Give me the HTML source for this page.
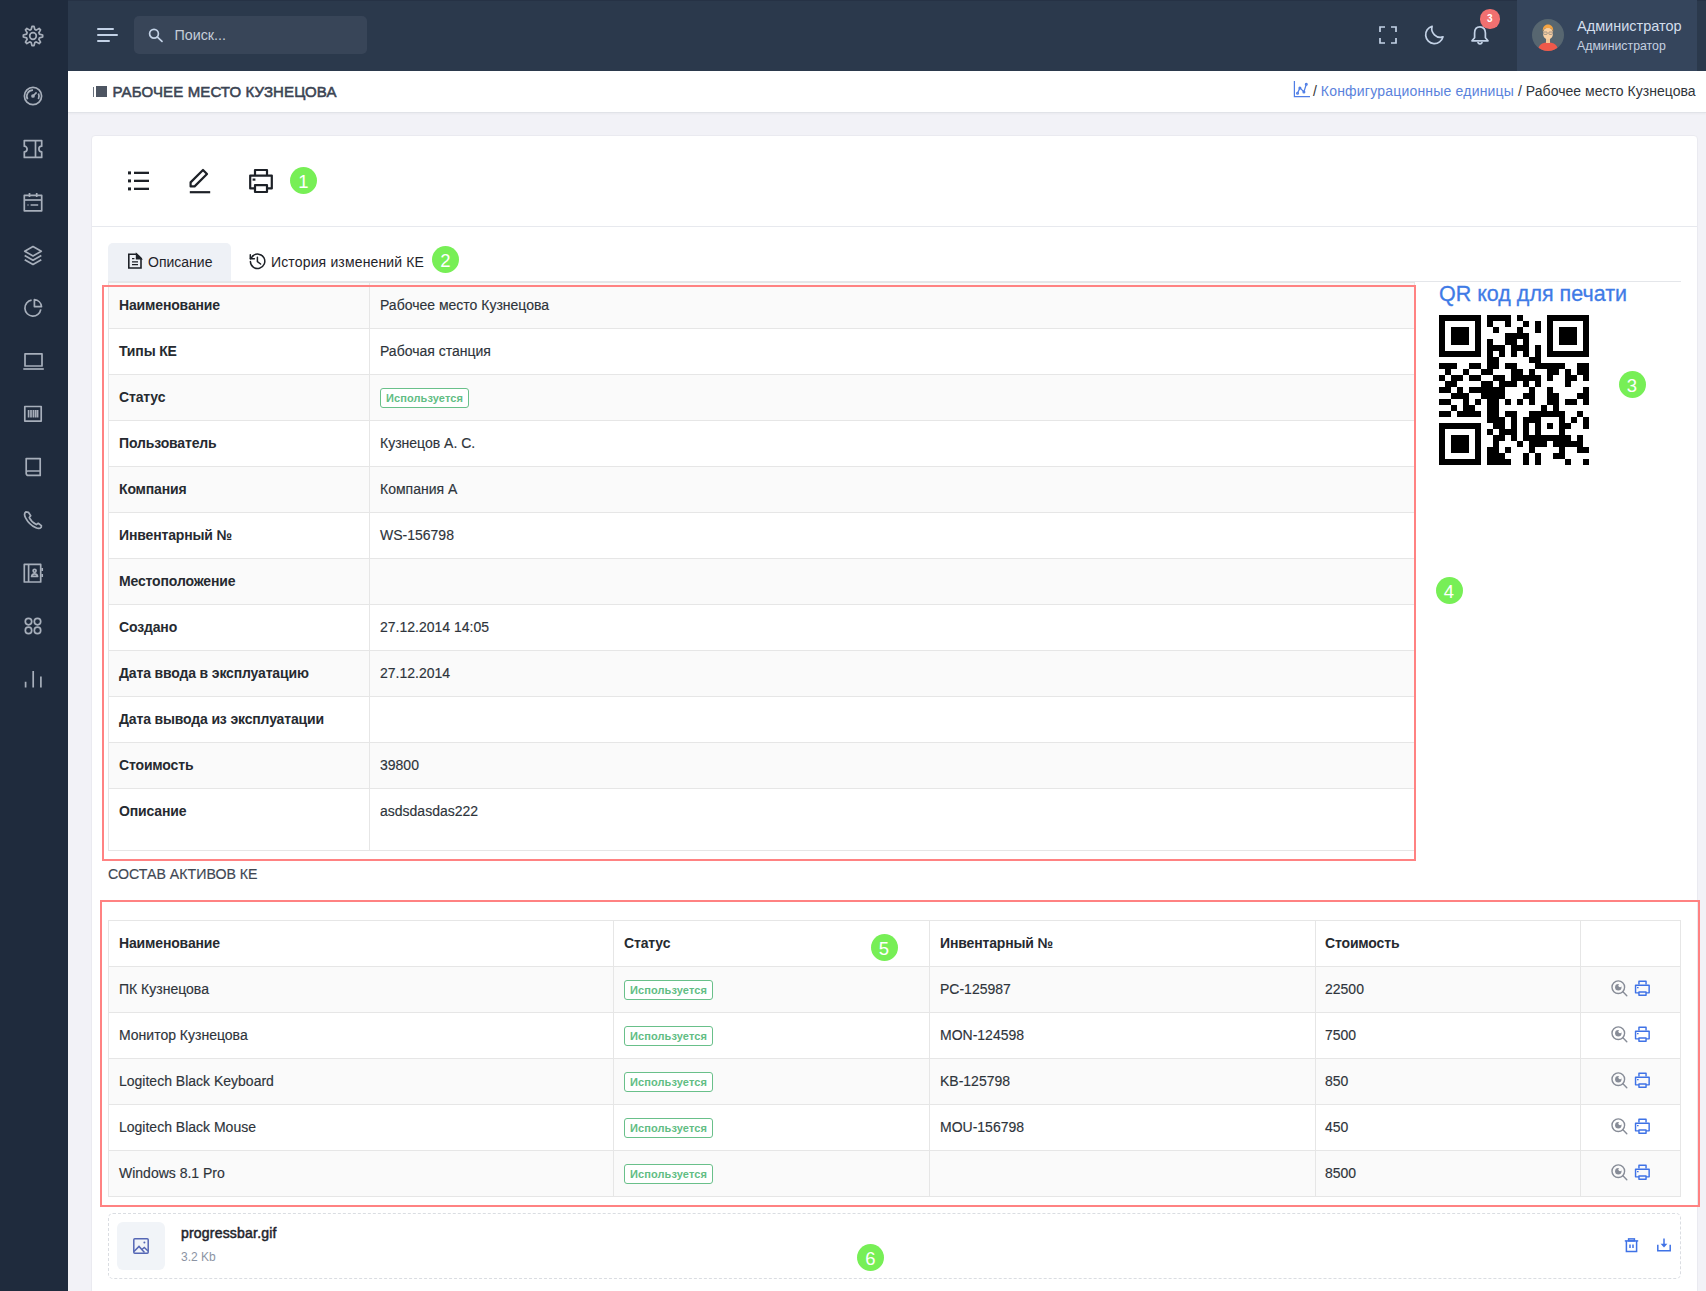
<!DOCTYPE html><html><head><meta charset="utf-8"><style>
*{box-sizing:border-box;margin:0;padding:0}
html,body{width:1706px;height:1291px;overflow:hidden;background:#f2f2f7;font-family:"Liberation Sans",sans-serif;color:#212529;font-size:14px}
.abs,.si,.row,.lab,.val,.vline,.badge,.dot,.txt{position:absolute}
#sidebar{position:absolute;left:0;top:0;width:68px;height:1291px;background:#1f2b3d}
#header{position:absolute;left:68px;top:0;width:1638px;height:71px;background:#2b394c;border-top:1px solid #263245}
#search{position:absolute;left:134px;top:16px;width:233px;height:38px;background:#384558;border-radius:5px}
#profile{position:absolute;left:1517px;top:0;width:180px;height:71px;background:#35455c}
#titlebar{position:absolute;left:68px;top:71px;width:1638px;height:42px;background:#fff;border-bottom:1px solid #e1e3e8;box-shadow:0 1px 2px rgba(0,0,0,0.04)}
#card{position:absolute;left:91px;top:135px;width:1607px;height:1200px;background:#fff;border:1px solid #eaeaf0;border-radius:4px}
.row{border:1px solid #e6e6e6}
.vline{width:1px;background:#e6e6e6}
.lab{font-weight:bold;color:#262a30;line-height:16px;white-space:nowrap;letter-spacing:-0.15px}
.val{color:#2e343b;line-height:16px;white-space:nowrap;-webkit-text-stroke:0.15px #2e343b}
.red{position:absolute;border:2px solid #ff8282}
.dot{width:27px;height:27px;border-radius:50%;background:#77ef56;color:#fff;font-size:18.5px;text-align:center;line-height:30px}
.badge{width:89px;height:20px;border:1px solid #69c08a;color:#62bd84;border-radius:3px;font-size:11px;font-weight:bold;line-height:18px;text-align:center;background:#fff;letter-spacing:0.1px}
.txt{white-space:nowrap}
</style></head><body>
<svg width="0" height="0" style="position:absolute"><defs><mask id="bite" maskUnits="userSpaceOnUse" x="0" y="0" width="17" height="17"><rect width="17" height="17" fill="#fff"/><circle cx="9.1" cy="5.5" r="1.7" fill="#000"/></mask></defs></svg>
<div id="sidebar"></div><div id="header"></div>
<svg class="si" style="left:23px;top:26px" width="20" height="20" viewBox="0 0 20 20" fill="none" stroke="#a7afbb" stroke-width="1.7" stroke-linecap="butt" stroke-linejoin="round" overflow="visible"><path d="M8.15 3.56 L8.99 0.35 L11.01 0.35 L11.85 3.56 L13.25 4.14 L16.10 2.46 L17.54 3.90 L15.86 6.75 L16.44 8.15 L19.65 8.99 L19.65 11.01 L16.44 11.85 L15.86 13.25 L17.54 16.10 L16.10 17.54 L13.25 15.86 L11.85 16.44 L11.01 19.65 L8.99 19.65 L8.15 16.44 L6.75 15.86 L3.90 17.54 L2.46 16.10 L4.14 13.25 L3.56 11.85 L0.35 11.01 L0.35 8.99 L3.56 8.15 L4.14 6.75 L2.46 3.90 L3.90 2.46 L6.75 4.14Z"/><circle cx="10" cy="10" r="3.3"/></svg>
<svg class="si" style="left:23px;top:86px" width="20" height="20" viewBox="0 0 20 20" fill="none" stroke="#a7afbb" stroke-width="1.7" stroke-linecap="butt" stroke-linejoin="round" overflow="visible"><circle cx="10" cy="10" r="8.6"/><path d="M4.6 13.2A6 6 0 0 1 10 4.2"/><path d="M15.4 7.5A6 6 0 0 1 15.4 13.2"/><path d="M10 10L13.6 6.4"/><circle cx="10" cy="10" r="1" fill="#a7afbb"/></svg>
<svg class="si" style="left:23px;top:139px" width="20" height="20" viewBox="0 0 20 20" fill="none" stroke="#a7afbb" stroke-width="1.7" stroke-linecap="butt" stroke-linejoin="round" overflow="visible"><path d="M1.3 1.6H18.7V7.2A2.8 2.8 0 0 0 18.7 12.8V18.4H1.3V12.8A2.8 2.8 0 0 0 1.3 7.2Z"/><path d="M12.5 1.6V18.4"/></svg>
<svg class="si" style="left:23px;top:192px" width="20" height="20" viewBox="0 0 20 20" fill="none" stroke="#a7afbb" stroke-width="1.7" stroke-linecap="butt" stroke-linejoin="round" overflow="visible"><rect x="1.3" y="3.4" width="17.4" height="15.4"/><path d="M1.3 8H18.7"/><path d="M6.5 1V5M13.7 1V5"/><path d="M4.5 13H5.5M7.6 13H15.2"/></svg>
<svg class="si" style="left:23px;top:245px" width="20" height="20" viewBox="0 0 20 20" fill="none" stroke="#a7afbb" stroke-width="1.7" stroke-linecap="butt" stroke-linejoin="round" overflow="visible"><path d="M10 1.5L18.3 6.2L10 10.9L1.7 6.2Z"/><path d="M1.7 10.5L10 15.2L18.3 10.5"/><path d="M1.7 14.7L10 19.4L18.3 14.7"/></svg>
<svg class="si" style="left:23px;top:298px" width="20" height="20" viewBox="0 0 20 20" fill="none" stroke="#a7afbb" stroke-width="1.7" stroke-linecap="butt" stroke-linejoin="round" overflow="visible"><path d="M17.8 11.4A8 8 0 1 1 8.6 2.2"/><path d="M11.4 1.5A8 8 0 0 1 18.5 8.6H11.4Z"/></svg>
<svg class="si" style="left:23px;top:351px" width="20" height="20" viewBox="0 0 20 20" fill="none" stroke="#a7afbb" stroke-width="1.7" stroke-linecap="butt" stroke-linejoin="round" overflow="visible"><rect x="2" y="2.8" width="17" height="12.2"/><path d="M0.3 18H20.8"/></svg>
<svg class="si" style="left:23px;top:404px" width="20" height="20" viewBox="0 0 20 20" fill="none" stroke="#a7afbb" stroke-width="1.7" stroke-linecap="butt" stroke-linejoin="round" overflow="visible"><rect x="1.8" y="2.5" width="16.4" height="14.6"/><path d="M5.6 6V13.6M8 6V13.6M10.4 6V13.6M12.6 6V13.6M14.6 6V13.6"/></svg>
<svg class="si" style="left:23px;top:457px" width="20" height="20" viewBox="0 0 20 20" fill="none" stroke="#a7afbb" stroke-width="1.7" stroke-linecap="butt" stroke-linejoin="round" overflow="visible"><path d="M3.2 15.4V1.6H17.2V18.4H5.2A2 2 0 0 1 3.2 16.4V15.4A1.5 1.5 0 0 1 4.7 14H17.2"/></svg>
<svg class="si" style="left:23px;top:510px" width="20" height="20" viewBox="0 0 20 20" fill="none" stroke="#a7afbb" stroke-width="1.7" stroke-linecap="butt" stroke-linejoin="round" overflow="visible"><path d="M2.8 1.8C1.4 3 1.2 5.2 2.6 7.8C5 12.4 8.6 15.8 13 17.8C15.4 18.9 17.2 18.5 18.2 17.3L18.4 15.6L15.2 13.3L13.3 14.6C10.3 13.2 7.8 10.6 6.3 7.6L7.7 5.7L5.4 2.3Z"/></svg>
<svg class="si" style="left:23px;top:563px" width="20" height="20" viewBox="0 0 20 20" fill="none" stroke="#a7afbb" stroke-width="1.7" stroke-linecap="butt" stroke-linejoin="round" overflow="visible"><rect x="1.3" y="1.4" width="16.4" height="17.6"/><path d="M5.6 1.4V19"/><circle cx="11.6" cy="7.8" r="1.5"/><path d="M8.6 13.4C9 11.6 10.2 10.8 11.6 10.8C13 10.8 14.2 11.6 14.6 13.4Z"/><path d="M19.2 5V8M19.2 11V14"/></svg>
<svg class="si" style="left:23px;top:616px" width="20" height="20" viewBox="0 0 20 20" fill="none" stroke="#a7afbb" stroke-width="1.7" stroke-linecap="butt" stroke-linejoin="round" overflow="visible"><circle cx="5.5" cy="5.6" r="3.2"/><circle cx="14.5" cy="5.6" r="3.2"/><circle cx="5.5" cy="14.4" r="3.2"/><circle cx="14.5" cy="14.4" r="3.2"/></svg>
<svg class="si" style="left:23px;top:669px" width="20" height="20" viewBox="0 0 20 20" fill="none" stroke="#a7afbb" stroke-width="1.7" stroke-linecap="butt" stroke-linejoin="round" overflow="visible"><path d="M2.6 12.8V18.6M10.2 2V18.6M17.9 7.4V18.6"/></svg>
<svg class="abs" style="left:96px;top:27px" width="22" height="16" viewBox="0 0 22 16" stroke="#c3d2e6" stroke-width="2" stroke-linecap="round"><path d="M2 2H17M2 8H21M2 14H13"/></svg>
<div id="search"></div>
<svg class="abs" style="left:147px;top:26px" width="18" height="18" viewBox="0 0 18 18" fill="none" stroke="#c3d2e6" stroke-width="1.7" stroke-linecap="round"><circle cx="7" cy="7.7" r="4.4"/><path d="M10.2 10.9L15 15.4"/></svg>
<div class="txt" style="left:174.5px;top:27px;font-size:14.3px;color:#c5cdd9;line-height:17px">Поиск...</div>
<svg class="abs" style="left:1378px;top:25px" width="20" height="20" viewBox="0 0 20 20" fill="none" stroke="#c3d2e6" stroke-width="1.7"><path d="M2 7V2H7M13 2H18V7M18 13V18H13M7 18H2V13"/></svg>
<svg class="abs" style="left:1423px;top:25px" width="22" height="21" viewBox="0 0 22 21" fill="none" stroke="#c3d2e6" stroke-width="1.7" stroke-linejoin="round"><path d="M9.1 1.3A8.8 8.8 0 1 0 20 11.9A8.7 8.7 0 0 1 9.1 1.3Z"/></svg>
<svg class="abs" style="left:1470px;top:25px" width="20" height="21" viewBox="0 0 20 21" fill="none" stroke="#c3d2e6" stroke-width="1.7" stroke-linejoin="round"><path d="M10 1.8C6.4 1.8 4.6 4.6 4.6 8V12.8L2 15.8H18L15.4 12.8V8C15.4 4.6 13.6 1.8 10 1.8Z"/><path d="M8 17.6Q10 20 12 17.6" stroke-linecap="round"/></svg>
<div class="abs" style="left:1480.2px;top:9.4px;width:19.4px;height:19.4px;border-radius:50%;background:#f07070;color:#fff;font-size:10px;font-weight:bold;text-align:center;line-height:19.4px">3</div>
<div id="profile"></div>
<svg class="abs" style="left:1532px;top:19px" width="32" height="32" viewBox="0 0 32 32"><circle cx="16" cy="16" r="16" fill="#576670"/>
<clipPath id="av"><circle cx="16" cy="16" r="16"/></clipPath><g clip-path="url(#av)">
<path d="M6 32C6 26 10 23.5 16 23.5C22 23.5 26 26 26 32Z" fill="#f0594a"/>
<rect x="14" y="19" width="4" height="5" fill="#f5c596"/>
<ellipse cx="16" cy="14.5" rx="5" ry="6" fill="#f8d0a4"/>
<path d="M10.8 12.5C10.5 7.5 13 5.5 16 5.5C19 5.5 21.5 7.5 21.2 12.5C20.5 10 19 9 16 9C13 9 11.5 10 10.8 12.5Z" fill="#f5a442"/>
<rect x="11.6" y="13" width="3.6" height="2.4" rx="0.8" fill="none" stroke="#7d7d7d" stroke-width="0.7"/>
<rect x="16.8" y="13" width="3.6" height="2.4" rx="0.8" fill="none" stroke="#7d7d7d" stroke-width="0.7"/>
</g></svg>
<div class="txt" style="left:1577px;top:18px;font-size:14.5px;color:#d3deec;line-height:17px">Администратор</div>
<div class="txt" style="left:1577px;top:39px;font-size:12.3px;color:#c5d1e0;line-height:15px">Администратор</div>
<div id="titlebar"></div>
<div class="abs" style="left:93px;top:86.5px;width:1px;height:10.5px;background:#69717d"></div>
<div class="abs" style="left:95.5px;top:86px;width:11px;height:11px;background:#4d5562"></div>
<div class="txt" style="left:112.5px;top:83px;font-size:15px;color:#3b4453;line-height:17px;letter-spacing:0.12px;-webkit-text-stroke:0.55px #3b4453">РАБОЧЕЕ МЕСТО КУЗНЕЦОВА</div>
<svg class="abs" style="left:1293px;top:80px" width="18" height="18" viewBox="0 0 18 18" fill="none" stroke="#4f7ee6" stroke-width="1.25"><path d="M1.4 1V16.5H17"/><path d="M4.5 13.3L6.9 7.9L10.9 11.9L13.3 4.2"/><circle cx="4.5" cy="13.3" r="0.9"/><circle cx="6.9" cy="7.9" r="0.9"/><circle cx="10.9" cy="11.9" r="0.9"/><circle cx="13.3" cy="4.2" r="0.9"/></svg>
<div class="txt" style="left:1313px;top:83px;line-height:16px;color:#333;letter-spacing:0.03px"><span style="color:#333">/ </span><span style="color:#5a82dc;letter-spacing:0.2px">Конфигурационные единицы</span><span style="color:#2f343a"> / Рабочее место Кузнецова</span></div>
<div id="card"></div>
<div class="abs" style="left:92px;top:226px;width:1605px;height:1px;background:#e7e9ee"></div>
<svg class="abs" style="left:127px;top:170px" width="23" height="22" viewBox="0 0 23 22" fill="#1d2127"><rect x="1" y="1.4" width="3" height="3"/><rect x="1" y="9.4" width="3" height="3"/><rect x="1" y="17.4" width="3" height="3"/><rect x="7" y="1.7" width="15" height="2.3"/><rect x="7" y="9.7" width="15" height="2.3"/><rect x="7" y="17.7" width="15" height="2.3"/></svg>
<svg class="abs" style="left:188px;top:168px" width="24" height="26" viewBox="0 0 24 26" fill="none" stroke="#1d2127" stroke-width="2.2" stroke-linejoin="round"><path d="M2.6 18.4V14.4L15 2L19 6L6.6 18.4Z"/><path d="M1.8 24.2H22.2"/></svg>
<svg class="abs" style="left:248px;top:168px" width="26" height="26" viewBox="0 0 26 26" fill="none" stroke="#1d2127" stroke-width="2.2" stroke-linejoin="round"><path d="M7 7.4V2H19V7.4"/><path d="M7 20.4H2.2V7.6H23.8V20.4H19"/><rect x="7" y="17.2" width="12" height="6.8"/><path d="M4.6 11.6H7.4" stroke-linecap="butt"/></svg>
<div class="dot" style="left:290.0px;top:167.0px">1</div>
<div class="abs" style="left:108px;top:281px;width:1573px;height:1px;background:#e4e6ea"></div>
<div class="abs" style="left:108px;top:243px;width:123px;height:38px;background:#eef1f6;border-radius:5px 5px 0 0"></div>
<svg class="abs" style="left:126px;top:252px" width="17" height="18" viewBox="0 0 17 18" fill="none" stroke="#1d2127" stroke-width="1.6" stroke-linejoin="miter"><path d="M2.8 2.2H10.8L15 6.4V16H2.8Z"/><path d="M10.6 2.2L15 6.6H10.6Z" fill="#1d2127"/><path d="M6 6.6H8.4M6 9.9H12M6 12.6H12" stroke-width="1.4"/></svg>
<div class="txt" style="left:148px;top:254px;line-height:16px;color:#1f2329">Описание</div>
<svg class="abs" style="left:248px;top:252px" width="18" height="18" viewBox="0 0 18 18" fill="none" stroke="#1d2127" stroke-width="1.5" stroke-linecap="round" stroke-linejoin="round"><path d="M2.4 9.4A7.2 7.2 0 1 0 4.6 4.1"/><path d="M2.3 2.8V6.8H6.4"/><path d="M2.4 6.7L4.7 4.2"/><path d="M9.4 5.2V9.7L12.6 12"/></svg>
<div class="txt" style="left:271px;top:254px;line-height:16px;color:#1f2329;letter-spacing:0.15px">История изменений КЕ</div>
<div class="dot" style="left:432.0px;top:246.0px">2</div>
<div class="row" style="left:108px;top:282px;width:1307px;height:47px;background:#fafafa"></div>
<div class="lab" style="left:119px;top:297px">Наименование</div>
<div class="val" style="left:380px;top:297px">Рабочее место Кузнецова</div>
<div class="row" style="left:108px;top:328px;width:1307px;height:47px;background:#fff"></div>
<div class="lab" style="left:119px;top:343px">Типы КЕ</div>
<div class="val" style="left:380px;top:343px">Рабочая станция</div>
<div class="row" style="left:108px;top:374px;width:1307px;height:47px;background:#fafafa"></div>
<div class="lab" style="left:119px;top:389px">Статус</div>
<div class="badge" style="left:380px;top:388px">Используется</div>
<div class="row" style="left:108px;top:420px;width:1307px;height:47px;background:#fff"></div>
<div class="lab" style="left:119px;top:435px">Пользователь</div>
<div class="val" style="left:380px;top:435px">Кузнецов А. С.</div>
<div class="row" style="left:108px;top:466px;width:1307px;height:47px;background:#fafafa"></div>
<div class="lab" style="left:119px;top:481px">Компания</div>
<div class="val" style="left:380px;top:481px">Компания А</div>
<div class="row" style="left:108px;top:512px;width:1307px;height:47px;background:#fff"></div>
<div class="lab" style="left:119px;top:527px">Инвентарный №</div>
<div class="val" style="left:380px;top:527px">WS-156798</div>
<div class="row" style="left:108px;top:558px;width:1307px;height:47px;background:#fafafa"></div>
<div class="lab" style="left:119px;top:573px">Местоположение</div>
<div class="row" style="left:108px;top:604px;width:1307px;height:47px;background:#fff"></div>
<div class="lab" style="left:119px;top:619px">Создано</div>
<div class="val" style="left:380px;top:619px">27.12.2014 14:05</div>
<div class="row" style="left:108px;top:650px;width:1307px;height:47px;background:#fafafa"></div>
<div class="lab" style="left:119px;top:665px">Дата ввода в эксплуатацию</div>
<div class="val" style="left:380px;top:665px">27.12.2014</div>
<div class="row" style="left:108px;top:696px;width:1307px;height:47px;background:#fff"></div>
<div class="lab" style="left:119px;top:711px">Дата вывода из эксплуатации</div>
<div class="row" style="left:108px;top:742px;width:1307px;height:47px;background:#fafafa"></div>
<div class="lab" style="left:119px;top:757px">Стоимость</div>
<div class="val" style="left:380px;top:757px">39800</div>
<div class="row" style="left:108px;top:788px;width:1307px;height:63px;background:#fff"></div>
<div class="lab" style="left:119px;top:803px">Описание</div>
<div class="val" style="left:380px;top:803px">asdsdasdas222</div>
<div class="vline" style="left:369px;top:282px;height:568px"></div>
<div class="red" style="left:102px;top:285px;width:1314px;height:576px"></div>
<div class="txt" style="left:1439px;top:282px;font-size:21.5px;color:#3f7be6;line-height:25px;-webkit-text-stroke:0.3px #3f7be6">QR код для печати</div>
<div class="abs" style="left:1439px;top:315px;width:150px;height:150px"><svg width="150" height="150" viewBox="0 0 150 150" shape-rendering="crispEdges"><path fill="#000" d="M0 0h42v6h-42zM48 0h24v6h-24zM78 0h6v6h-6zM108 0h42v6h-42zM0 6h6v6h-6zM36 6h6v6h-6zM48 6h6v6h-6zM66 6h6v6h-6zM84 6h6v6h-6zM96 6h6v6h-6zM108 6h6v6h-6zM144 6h6v6h-6zM0 12h6v6h-6zM12 12h18v6h-18zM36 12h6v6h-6zM54 12h6v6h-6zM78 12h6v6h-6zM96 12h6v6h-6zM108 12h6v6h-6zM120 12h18v6h-18zM144 12h6v6h-6zM0 18h6v6h-6zM12 18h18v6h-18zM36 18h6v6h-6zM66 18h24v6h-24zM108 18h6v6h-6zM120 18h18v6h-18zM144 18h6v6h-6zM0 24h6v6h-6zM12 24h18v6h-18zM36 24h6v6h-6zM48 24h6v6h-6zM66 24h12v6h-12zM84 24h6v6h-6zM108 24h6v6h-6zM120 24h18v6h-18zM144 24h6v6h-6zM0 30h6v6h-6zM36 30h6v6h-6zM48 30h18v6h-18zM72 30h18v6h-18zM96 30h6v6h-6zM108 30h6v6h-6zM144 30h6v6h-6zM0 36h42v6h-42zM48 36h6v6h-6zM60 36h6v6h-6zM72 36h6v6h-6zM84 36h6v6h-6zM96 36h6v6h-6zM108 36h42v6h-42zM48 42h12v6h-12zM90 42h12v6h-12zM0 48h18v6h-18zM30 48h12v6h-12zM48 48h12v6h-12zM66 48h12v6h-12zM96 48h30v6h-30zM138 48h12v6h-12zM6 54h6v6h-6zM24 54h6v6h-6zM42 54h12v6h-12zM72 54h12v6h-12zM90 54h6v6h-6zM108 54h12v6h-12zM126 54h6v6h-6zM138 54h12v6h-12zM0 60h6v6h-6zM12 60h12v6h-12zM30 60h12v6h-12zM54 60h12v6h-12zM72 60h30v6h-30zM108 60h6v6h-6zM126 60h12v6h-12zM144 60h6v6h-6zM6 66h12v6h-12zM42 66h12v6h-12zM60 66h18v6h-18zM84 66h6v6h-6zM96 66h6v6h-6zM126 66h6v6h-6zM0 72h12v6h-12zM18 72h6v6h-6zM30 72h36v6h-36zM90 72h6v6h-6zM108 72h6v6h-6zM144 72h6v6h-6zM12 78h18v6h-18zM42 78h24v6h-24zM84 78h12v6h-12zM108 78h12v6h-12zM138 78h12v6h-12zM0 84h12v6h-12zM24 84h6v6h-6zM36 84h6v6h-6zM48 84h12v6h-12zM66 84h6v6h-6zM78 84h6v6h-6zM90 84h6v6h-6zM108 84h12v6h-12zM126 84h12v6h-12zM144 84h6v6h-6zM12 90h6v6h-6zM24 90h12v6h-12zM48 90h12v6h-12zM102 90h6v6h-6zM114 90h6v6h-6zM0 96h12v6h-12zM18 96h24v6h-24zM48 96h12v6h-12zM66 96h12v6h-12zM90 96h36v6h-36zM138 96h6v6h-6zM48 102h18v6h-18zM72 102h6v6h-6zM84 102h18v6h-18zM120 102h6v6h-6zM132 102h6v6h-6zM144 102h6v6h-6zM0 108h42v6h-42zM54 108h12v6h-12zM72 108h6v6h-6zM84 108h6v6h-6zM96 108h6v6h-6zM108 108h6v6h-6zM120 108h12v6h-12zM144 108h6v6h-6zM0 114h6v6h-6zM36 114h6v6h-6zM48 114h6v6h-6zM60 114h18v6h-18zM84 114h6v6h-6zM96 114h6v6h-6zM120 114h6v6h-6zM0 120h6v6h-6zM12 120h18v6h-18zM36 120h6v6h-6zM54 120h12v6h-12zM72 120h6v6h-6zM84 120h48v6h-48zM138 120h6v6h-6zM0 126h6v6h-6zM12 126h18v6h-18zM36 126h6v6h-6zM54 126h6v6h-6zM78 126h6v6h-6zM90 126h18v6h-18zM114 126h30v6h-30zM0 132h6v6h-6zM12 132h18v6h-18zM36 132h6v6h-6zM48 132h12v6h-12zM66 132h6v6h-6zM90 132h6v6h-6zM120 132h6v6h-6zM138 132h12v6h-12zM0 138h6v6h-6zM36 138h6v6h-6zM48 138h18v6h-18zM84 138h6v6h-6zM96 138h6v6h-6zM114 138h12v6h-12zM0 144h42v6h-42zM48 144h24v6h-24zM84 144h6v6h-6zM96 144h6v6h-6zM126 144h6v6h-6zM144 144h6v6h-6z"/></svg></div>
<div class="dot" style="left:1618.5px;top:370.5px">3</div>
<div class="dot" style="left:1435.5px;top:576.5px">4</div>
<div class="txt" style="left:108px;top:866px;line-height:16px;color:#3f4753;font-size:14.2px;-webkit-text-stroke:0.15px #3f4753">СОСТАВ АКТИВОВ КЕ</div>
<div class="row" style="left:108px;top:920px;width:1573px;height:47px;background:#fff"></div>
<div class="lab" style="left:119px;top:935px">Наименование</div>
<div class="lab" style="left:624px;top:935px">Статус</div>
<div class="lab" style="left:940px;top:935px">Инвентарный №</div>
<div class="lab" style="left:1325px;top:935px">Стоимость</div>
<div class="row" style="left:108px;top:966px;width:1573px;height:47px;background:#fafafa"></div>
<div class="val" style="left:119px;top:981px">ПК Кузнецова</div>
<div class="badge" style="left:624px;top:980px">Используется</div>
<div class="val" style="left:940px;top:981px">PC-125987</div>
<div class="val" style="left:1325px;top:981px">22500</div>
<svg class="abs" style="left:1611px;top:980px" width="17" height="17" viewBox="0 0 17 17" fill="none" stroke="#878c97" stroke-width="1.4" stroke-linecap="round"><circle cx="7.3" cy="7.2" r="6.3"/><path d="M11.9 11.8L15.8 15.8"/><circle cx="7.3" cy="7.3" r="3.2" fill="#878c97" stroke="none" mask="url(#bite)"/></svg>
<svg class="abs" style="left:1634px;top:980px" width="17" height="17" viewBox="0 0 17 17" fill="none" stroke="#3f72e6" stroke-width="1.45" stroke-linejoin="round"><path d="M4.95 4.4V1.15H12.05V4.4"/><path d="M4.95 12.85H1.55V5.15H15.15V12.85H12.05"/><rect x="4.95" y="12.05" width="7.1" height="3.1"/><path d="M3 7.6H4.6" stroke-width="1.3"/></svg>
<div class="row" style="left:108px;top:1012px;width:1573px;height:47px;background:#fff"></div>
<div class="val" style="left:119px;top:1027px">Монитор Кузнецова</div>
<div class="badge" style="left:624px;top:1026px">Используется</div>
<div class="val" style="left:940px;top:1027px">MON-124598</div>
<div class="val" style="left:1325px;top:1027px">7500</div>
<svg class="abs" style="left:1611px;top:1026px" width="17" height="17" viewBox="0 0 17 17" fill="none" stroke="#878c97" stroke-width="1.4" stroke-linecap="round"><circle cx="7.3" cy="7.2" r="6.3"/><path d="M11.9 11.8L15.8 15.8"/><circle cx="7.3" cy="7.3" r="3.2" fill="#878c97" stroke="none" mask="url(#bite)"/></svg>
<svg class="abs" style="left:1634px;top:1026px" width="17" height="17" viewBox="0 0 17 17" fill="none" stroke="#3f72e6" stroke-width="1.45" stroke-linejoin="round"><path d="M4.95 4.4V1.15H12.05V4.4"/><path d="M4.95 12.85H1.55V5.15H15.15V12.85H12.05"/><rect x="4.95" y="12.05" width="7.1" height="3.1"/><path d="M3 7.6H4.6" stroke-width="1.3"/></svg>
<div class="row" style="left:108px;top:1058px;width:1573px;height:47px;background:#fafafa"></div>
<div class="val" style="left:119px;top:1073px">Logitech Black Keyboard</div>
<div class="badge" style="left:624px;top:1072px">Используется</div>
<div class="val" style="left:940px;top:1073px">KB-125798</div>
<div class="val" style="left:1325px;top:1073px">850</div>
<svg class="abs" style="left:1611px;top:1072px" width="17" height="17" viewBox="0 0 17 17" fill="none" stroke="#878c97" stroke-width="1.4" stroke-linecap="round"><circle cx="7.3" cy="7.2" r="6.3"/><path d="M11.9 11.8L15.8 15.8"/><circle cx="7.3" cy="7.3" r="3.2" fill="#878c97" stroke="none" mask="url(#bite)"/></svg>
<svg class="abs" style="left:1634px;top:1072px" width="17" height="17" viewBox="0 0 17 17" fill="none" stroke="#3f72e6" stroke-width="1.45" stroke-linejoin="round"><path d="M4.95 4.4V1.15H12.05V4.4"/><path d="M4.95 12.85H1.55V5.15H15.15V12.85H12.05"/><rect x="4.95" y="12.05" width="7.1" height="3.1"/><path d="M3 7.6H4.6" stroke-width="1.3"/></svg>
<div class="row" style="left:108px;top:1104px;width:1573px;height:47px;background:#fff"></div>
<div class="val" style="left:119px;top:1119px">Logitech Black Mouse</div>
<div class="badge" style="left:624px;top:1118px">Используется</div>
<div class="val" style="left:940px;top:1119px">MOU-156798</div>
<div class="val" style="left:1325px;top:1119px">450</div>
<svg class="abs" style="left:1611px;top:1118px" width="17" height="17" viewBox="0 0 17 17" fill="none" stroke="#878c97" stroke-width="1.4" stroke-linecap="round"><circle cx="7.3" cy="7.2" r="6.3"/><path d="M11.9 11.8L15.8 15.8"/><circle cx="7.3" cy="7.3" r="3.2" fill="#878c97" stroke="none" mask="url(#bite)"/></svg>
<svg class="abs" style="left:1634px;top:1118px" width="17" height="17" viewBox="0 0 17 17" fill="none" stroke="#3f72e6" stroke-width="1.45" stroke-linejoin="round"><path d="M4.95 4.4V1.15H12.05V4.4"/><path d="M4.95 12.85H1.55V5.15H15.15V12.85H12.05"/><rect x="4.95" y="12.05" width="7.1" height="3.1"/><path d="M3 7.6H4.6" stroke-width="1.3"/></svg>
<div class="row" style="left:108px;top:1150px;width:1573px;height:47px;background:#fafafa"></div>
<div class="val" style="left:119px;top:1165px">Windows 8.1 Pro</div>
<div class="badge" style="left:624px;top:1164px">Используется</div>
<div class="val" style="left:1325px;top:1165px">8500</div>
<svg class="abs" style="left:1611px;top:1164px" width="17" height="17" viewBox="0 0 17 17" fill="none" stroke="#878c97" stroke-width="1.4" stroke-linecap="round"><circle cx="7.3" cy="7.2" r="6.3"/><path d="M11.9 11.8L15.8 15.8"/><circle cx="7.3" cy="7.3" r="3.2" fill="#878c97" stroke="none" mask="url(#bite)"/></svg>
<svg class="abs" style="left:1634px;top:1164px" width="17" height="17" viewBox="0 0 17 17" fill="none" stroke="#3f72e6" stroke-width="1.45" stroke-linejoin="round"><path d="M4.95 4.4V1.15H12.05V4.4"/><path d="M4.95 12.85H1.55V5.15H15.15V12.85H12.05"/><rect x="4.95" y="12.05" width="7.1" height="3.1"/><path d="M3 7.6H4.6" stroke-width="1.3"/></svg>
<div class="vline" style="left:613px;top:920px;height:276px"></div>
<div class="vline" style="left:929px;top:920px;height:276px"></div>
<div class="vline" style="left:1315px;top:920px;height:276px"></div>
<div class="vline" style="left:1580px;top:920px;height:276px"></div>
<div class="red" style="left:100px;top:900px;width:1600px;height:307px"></div>
<div class="dot" style="left:870.5px;top:933.5px">5</div>
<div class="abs" style="left:108px;top:1213px;width:1573px;height:66px;border:1px dashed #dadde2;border-radius:5px"></div>
<div class="abs" style="left:117px;top:1222px;width:48px;height:48px;background:#f1f4f8;border-radius:6px"></div>
<svg class="abs" style="left:133px;top:1238px" width="16" height="16" viewBox="0 0 16 16" fill="none" stroke="#5567b5" stroke-width="1.5"><rect x="0.8" y="0.8" width="14.4" height="14.4" rx="1"/><path d="M1 13.5L6 8.4L11.5 14.5M9.2 11.2L11.3 9.4L15 13"/><circle cx="11.4" cy="4.6" r="1" fill="#5567b5" stroke="none"/></svg>
<div class="txt" style="left:181px;top:1225px;font-size:14px;color:#1f242c;line-height:16px;letter-spacing:0.2px;-webkit-text-stroke:0.5px #1f242c">progressbar.gif</div>
<div class="txt" style="left:181px;top:1250px;font-size:12px;color:#8c94a3;line-height:14px">3.2 Kb</div>
<svg class="abs" style="left:1624px;top:1238px" width="15" height="15" viewBox="0 0 15 15" fill="none" stroke="#3f72e6" stroke-width="1.5"><path d="M0.8 2.9H14.2"/><rect x="4.6" y="0.9" width="5.8" height="2"/><path d="M2.4 2.9V13.6H12.6V2.9"/><path d="M6 6.4V10M9 6.4V10"/></svg>
<svg class="abs" style="left:1657px;top:1238px" width="14" height="14" viewBox="0 0 14 14" fill="none" stroke="#3f72e6" stroke-width="1.5"><path d="M0.8 6.8V12.8H13.2V6.8"/><path d="M7 0.4V6.5"/><path d="M3.6 5.8H10.4L7 9.4Z" fill="#3f72e6" stroke="none"/></svg>
<div class="dot" style="left:857.0px;top:1243.5px">6</div>
</body></html>
